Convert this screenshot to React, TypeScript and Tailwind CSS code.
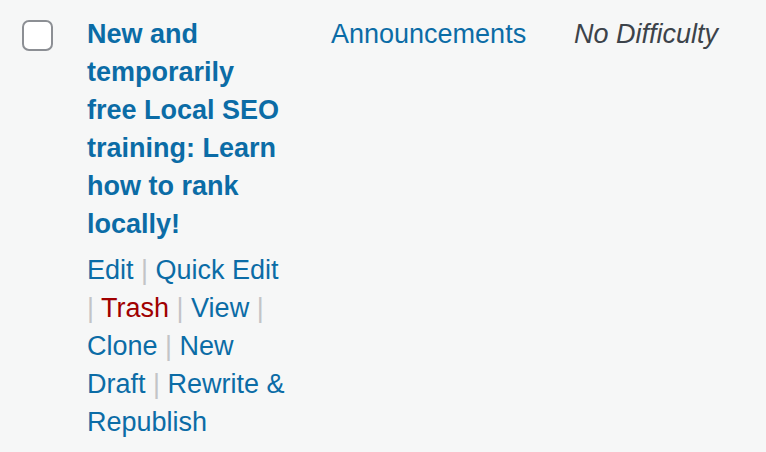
import React from "react";

const Sep = () => <span className="text-[#c3c4c7]">|</span>;

export default function App() {
  return (
    <div
      className="w-[766px] h-[452px] bg-[#f6f7f7] overflow-hidden text-[27px] leading-[38px]"
      style={{ fontFamily: '"Liberation Sans", Arial, sans-serif' }}
    >
      <div className="flex pt-[15px]">
        <div className="w-[87px] shrink-0 pl-[22px] pt-[5px]">
          <div className="w-[31px] h-[31px] rounded-[7px] border-2 border-[#8c8f94] bg-white" />
        </div>
        <div className="w-[202px] shrink-0">
          <div className="font-bold text-[#0b6ca6]">
            New and temporarily free Local SEO training: Learn how to rank locally!
          </div>
          <div className="mt-[8px] text-[#0b6ca6]">
            <span>Edit</span> <Sep /> <span>Quick Edit</span> <Sep />{" "}
            <span className="text-[#a00000]">Trash</span> <Sep /> <span>View</span> <Sep />{" "}
            <span>Clone</span> <Sep /> <span>New Draft</span> <Sep />{" "}
            <span>Rewrite &amp; Republish</span>
          </div>
        </div>
        <div className="w-[243px] shrink-0 ml-[42px] text-[#0b6ca6]">Announcements</div>
        <div className="italic text-[#3c434a]">No Difficulty</div>
      </div>
    </div>
  );
}
